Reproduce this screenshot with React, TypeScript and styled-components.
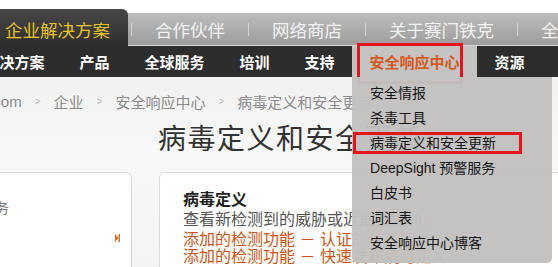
import styled, { createGlobalStyle } from 'styled-components';

const GlobalStyle = createGlobalStyle`
  html, body {
    margin: 0;
    padding: 0;
  }
  body {
    width: 558px;
    height: 267px;
    overflow: hidden;
    background: #f4f4f4;
    font-family: "Liberation Sans", "Noto Sans CJK SC", sans-serif;
  }
`;

const Page = styled.div`
  width: 558px;
  height: 267px;
  overflow: hidden;
  background: linear-gradient(to bottom, #efefef 0, #f1f1f1 80px, #f8f8f8 150px, #f4f4f4 100%);
`;

const Header = styled.header`
  position: relative;
  z-index: 5;
  padding-top: 9px;
  background: #fff;
`;

const TopBar = styled.div`
  display: flex;
  align-items: stretch;
  height: 37px;
  margin-left: -13px;
  background: linear-gradient(
    to bottom,
    #fff 0,
    #fff 4px,
    #bdbdbd 4px,
    #9d9d9d calc(100% - 1px),
    #d6d6d6 calc(100% - 1px)
  );
`;

const TopTab = styled.a<{ $active?: boolean }>`
  display: flex;
  align-items: center;
  padding: 4px ${(p) => (p.$active ? '18px' : '0')} 0;
  font-size: 17.5px;
  color: ${(p) => (p.$active ? '#e8c22a' : '#f1f1f1')};
  background: ${(p) => (p.$active ? 'linear-gradient(to bottom, #474747, #2e2e2e)' : 'none')};
  border-top-right-radius: ${(p) => (p.$active ? '6px' : '0')};
  white-space: nowrap;
  text-decoration: none;
`;

const Divider = styled.span<{ $tight?: boolean }>`
  align-self: center;
  flex-shrink: 0;
  width: 1px;
  height: 13px;
  margin: 4px 23px 0 ${(p) => (p.$tight ? '3px' : '23px')};
  background: #d4d4d4;
`;

const SubNav = styled.nav`
  display: flex;
  height: 31px;
  margin-left: -33px;
  background: #2d2d2d;
`;

const NavEntry = styled.div`
  position: relative;
  display: flex;
`;

const NavLink = styled.a<{ $active?: boolean }>`
  display: flex;
  align-items: center;
  padding: 0 17.5px;
  font-size: 15px;
  font-weight: bold;
  white-space: nowrap;
  text-decoration: none;
  color: ${(p) => (p.$active ? '#d35a1f' : '#ffffff')};
  background: ${(p) => (p.$active ? '#c4c3c2' : 'transparent')};
`;

const NavMark = styled.span`
  position: absolute;
  left: 5px;
  top: -3px;
  width: 106px;
  height: 41px;
  box-sizing: border-box;
  border: 3px solid #e3141b;
  pointer-events: none;
`;

const DropMenu = styled.ul`
  position: absolute;
  top: 100%;
  left: 0;
  width: 200px;
  margin: 0;
  padding: 4px 0 7px;
  list-style: none;
  background: rgba(194, 193, 192, 0.965);
  border-radius: 0 0 5px 5px;
`;

const DropItem = styled.li`
  position: relative;
  height: 25px;
  line-height: 25px;
  padding-left: 18px;
  font-size: 14px;
  color: #151515;
  white-space: nowrap;
`;

const ItemMark = styled.span`
  position: absolute;
  left: 1px;
  top: 1px;
  width: 169px;
  height: 22px;
  box-sizing: border-box;
  border: 3px solid #e3141b;
`;

const Main = styled.main`
  padding-top: 14px;
`;

const Crumbs = styled.div`
  display: flex;
  align-items: center;
  height: 20px;
  margin-left: -75px;
  font-size: 15px;
  color: #8c8c8c;
  white-space: nowrap;
`;

const CrumbSep = styled.span`
  font-size: 10px;
  color: #b9b9b9;
  margin: 0 13px;
`;

const Title = styled.h1`
  margin: 11px 0 0 158px;
  font-size: 28px;
  line-height: 36px;
  font-weight: normal;
  letter-spacing: 1.5px;
  color: #333;
  white-space: nowrap;
`;

const Cards = styled.div`
  display: flex;
  gap: 27px;
  margin: 14px 0 0 -60px;
`;

const Card = styled.section<{ $width: number }>`
  flex-shrink: 0;
  width: ${(p) => p.$width}px;
  height: 120px;
  box-sizing: border-box;
  background: #fff;
  border: 1px solid #dcdcdc;
  border-bottom: none;
  border-radius: 6px 6px 0 0;
`;

const SideBody = styled.div`
  padding: 25px 11px 0 12px;
  font-size: 14px;
  line-height: 20px;
  color: #777;
`;

const MoreRow = styled.div`
  display: flex;
  justify-content: flex-end;
  align-items: center;
  height: 20px;
  margin-top: 10px;
`;

const InfoBody = styled.div`
  padding: 17px 0 0 23px;
  white-space: nowrap;
`;

const InfoHead = styled.h2`
  margin: 0;
  font-size: 16px;
  line-height: 20px;
  font-weight: bold;
  color: #222;
`;

const InfoText = styled.p`
  margin: 0;
  font-size: 16px;
  line-height: 20px;
  color: #555;
`;

const InfoLinks = styled.div`
  margin-top: 1px;
  font-size: 16px;
  line-height: 17px;
  color: #c9561a;
`;

const topTabs = ['合作伙伴', '网络商店', '关于赛门铁克', '全球网站'];
const navItems = ['解决方案', '产品', '全球服务', '培训', '支持'];
const menuItems = [
  '安全情报',
  '杀毒工具',
  '病毒定义和安全更新',
  'DeepSight 预警服务',
  '白皮书',
  '词汇表',
  '安全响应中心博客',
];

export default function App() {
  return (
    <Page>
      <GlobalStyle />
      <Header>
        <TopBar>
          <TopTab $active>企业解决方案</TopTab>
          <Divider $tight />
          {topTabs.map((t, i) => (
            <span key={t} style={{ display: 'contents' }}>
              <TopTab>{t}</TopTab>
              {i < topTabs.length - 1 && <Divider />}
            </span>
          ))}
        </TopBar>
        <SubNav>
          {navItems.map((n) => (
            <NavLink key={n}>{n}</NavLink>
          ))}
          <NavEntry>
            <NavLink $active>安全响应中心</NavLink>
            <NavMark />
            <DropMenu>
              {menuItems.map((m, i) => (
                <DropItem key={m}>
                  {i === 2 && <ItemMark />}
                  {m}
                </DropItem>
              ))}
            </DropMenu>
          </NavEntry>
          <NavLink>资源</NavLink>
        </SubNav>
      </Header>
      <Main>
        <Crumbs>
          symantec.com
          <CrumbSep>&gt;</CrumbSep>
          企业
          <CrumbSep>&gt;</CrumbSep>
          安全响应中心
          <CrumbSep>&gt;</CrumbSep>
          病毒定义和安全更新
        </Crumbs>
        <Title>病毒定义和安全更新</Title>
        <Cards>
          <Card $width={192}>
            <SideBody>
              联系服务
              <MoreRow>
                <svg width="5" height="8" viewBox="0 0 5 8">
                  <path d="M0 0 L3.5 4 L0 8 Z" fill="#e0701e" />
                  <rect x="3.5" y="0" width="1.5" height="8" fill="#e0701e" />
                </svg>
              </MoreRow>
            </SideBody>
          </Card>
          <Card $width={520}>
            <InfoBody>
              <InfoHead>病毒定义</InfoHead>
              <InfoText>查看新检测到的威胁或近期的威胁。</InfoText>
              <InfoLinks>
                <div>添加的检测功能 － 认证的病毒定义</div>
                <div>添加的检测功能 － 快速发布病毒定义</div>
              </InfoLinks>
            </InfoBody>
          </Card>
        </Cards>
      </Main>
    </Page>
  );
}
